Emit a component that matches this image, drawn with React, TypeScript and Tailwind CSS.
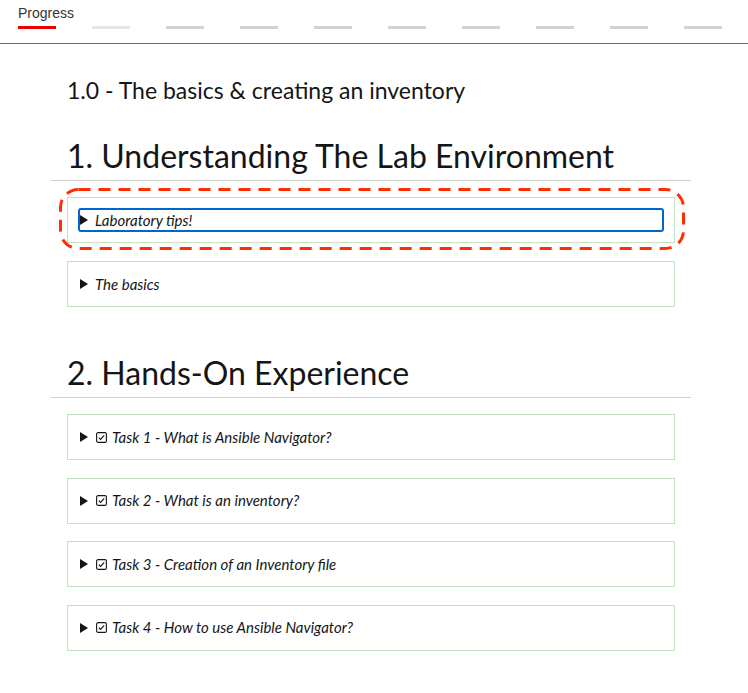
import React from 'react';

const segments = Array.from({ length: 10 }, (_, i) => i);

const tasks = [
  'Task 1 - What is Ansible Navigator?',
  'Task 2 - What is an inventory?',
  'Task 3 - Creation of an Inventory file',
  'Task 4 - How to use Ansible Navigator?',
];

const Marker = () => (
  <svg width="8" height="10" viewBox="0 0 8 10" className="shrink-0">
    <polygon points="0,0 8,5 0,10" fill="#151515" />
  </svg>
);

const CheckIcon = () => (
  <svg width="11" height="11" viewBox="0 0 11 11" className="shrink-0">
    <rect x="0.6" y="0.6" width="9.8" height="9.8" rx="1.5" fill="none" stroke="#151515" strokeWidth="1.1" />
    <polyline points="2.8,5.6 4.6,7.4 8.2,3.4" fill="none" stroke="#151515" strokeWidth="1.1" />
  </svg>
);

const Row = ({ label, task, focused }: { label: string; task?: boolean; focused?: boolean }) => (
  <div className="border border-[#bfe0c1] px-[10px] py-[10px]">
    <div
      className={`flex h-[24px] items-center ${focused ? 'rounded-[3px] border-2 border-[#0066cc]' : 'border-2 border-transparent'}`}
    >
      <Marker />
      {task && (
        <span className="ml-[8px]">
          <CheckIcon />
        </span>
      )}
      <span className={`${task ? 'ml-[5px]' : 'ml-[7px]'} text-[15px] italic text-[#151515]`}>{label}</span>
    </div>
  </div>
);

const App = () => {
  return (
    <div className="min-h-screen bg-white" style={{ fontFamily: 'Lato, sans-serif' }}>
      {/* Progress bar */}
      <div className="border-b border-[#6a6e73] px-[18px] pt-[4px] pb-[14px]">
        <div className="text-[14px] leading-[18px] text-[#333]" style={{ fontFamily: '"Liberation Sans", Arial, sans-serif' }}>
          Progress
        </div>
        <div className="mt-[4px] flex gap-[36px]">
          {segments.map((i) => (
            <div
              key={i}
              className={`h-[3px] w-[38px] ${i === 0 ? 'bg-[#ee0000]' : i === 1 ? 'bg-[#e6e6e6]' : 'bg-[#d2d2d2]'}`}
            />
          ))}
        </div>
      </div>

      <div className="ml-[51px] w-[640px]">
        <div className="px-4 pt-[30px] text-[23px] leading-[32px] text-[#151515]">
          1.0 - The basics &amp; creating an inventory
        </div>

        {/* Section 1 */}
        <h1 className="mt-[28px] border-b border-[#d2d2d2] px-4 pb-[2px] text-[32px] leading-[44px] text-[#151515]">
          1. Understanding The Lab Environment
        </h1>
        <div className="px-4 pt-[16px]">
          <div className="relative">
            <Row label="Laboratory tips!" focused />
            <svg className="absolute left-[-8px] top-[-9px]" width="626" height="62" viewBox="0 0 626 62">
              <rect x="1.5" y="1.5" width="623" height="59" rx="18" fill="none" stroke="#ff2d00" strokeWidth="3" strokeDasharray="12 8" />
            </svg>
          </div>
          <div className="mt-[18px]">
            <Row label="The basics" />
          </div>
        </div>

        {/* Section 2 */}
        <h1 className="mt-[44px] border-b border-[#d2d2d2] px-4 pb-[2px] text-[32px] leading-[44px] text-[#151515]">
          2. Hands-On Experience
        </h1>
        <div className="flex flex-col gap-[17.5px] px-4 pt-[16px]">
          {tasks.map((t) => (
            <Row key={t} label={t} task />
          ))}
        </div>
      </div>
    </div>
  );
};

export default App;
